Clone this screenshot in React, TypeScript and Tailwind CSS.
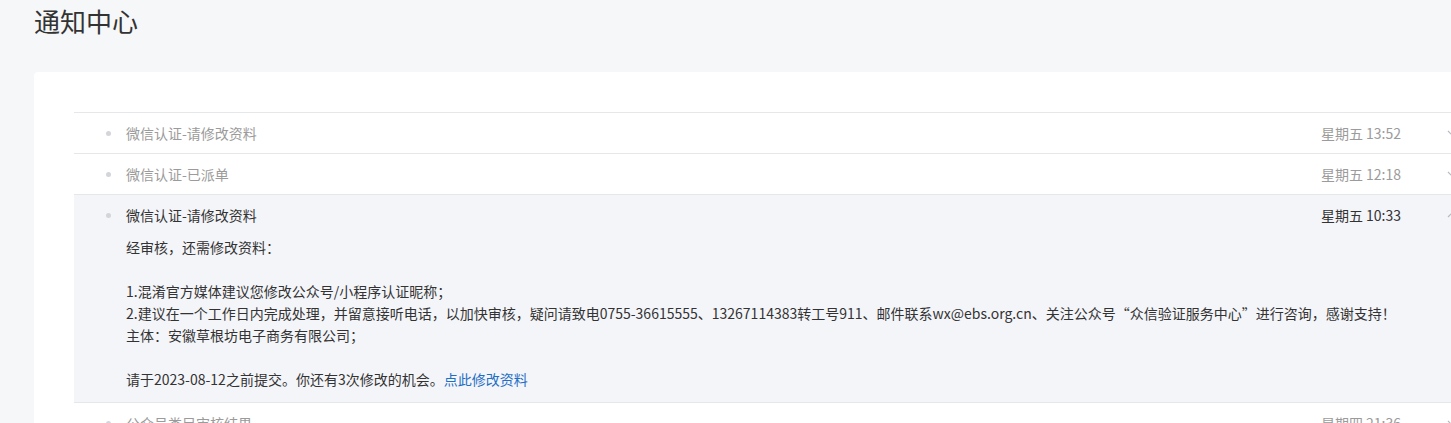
import React from "react";

function Chevron({ up }: { up?: boolean }) {
  return (
    <svg width="10" height="6" viewBox="0 0 10 6" className="shrink-0">
      {up ? (
        <path d="M1 5 L5 1 L9 5" fill="none" stroke="#b8bac0" strokeWidth="1.2" />
      ) : (
        <path d="M1 1 L5 5 L9 1" fill="none" stroke="#b8bac0" strokeWidth="1.2" />
      )}
    </svg>
  );
}

function Row({
  title,
  time,
  active,
  up,
}: {
  title: string;
  time: string;
  active?: boolean;
  up?: boolean;
}) {
  return (
    <div className="flex h-[40px] items-center pl-[32px] pr-[13px]">
      <span className="h-[5px] w-[5px] shrink-0 rounded-full bg-[#d3d5da]" />
      <span
        className={
          active
            ? "ml-[15px] text-[14px] text-[#333333]"
            : "ml-[15px] text-[14px] text-[#9b9b9b]"
        }
      >
        {title}
      </span>
      <span
        className={
          active
            ? "ml-auto text-[14px] text-[#333333]"
            : "ml-auto text-[14px] text-[#9b9b9b]"
        }
      >
        {time}
      </span>
      <span className="ml-[46px]">
        <Chevron up={up} />
      </span>
    </div>
  );
}

export default function App() {
  return (
    <div className="h-[423px] w-full overflow-hidden bg-[#f6f7f9] font-['Noto_Sans_CJK_SC',sans-serif]">
      <div className="h-[42px] pl-[34px] text-[26px] leading-[42px] text-[#333333]">
        通知中心
      </div>
      <div className="ml-[34px] mt-[30px] w-[1520px] rounded-[4px] bg-white pl-[40px] pt-[40px]">
        <div className="w-[1396px]">
          <div className="border-t border-[#e6e7eb]">
            <Row title="微信认证-请修改资料" time="星期五 13:52" />
          </div>
          <div className="border-t border-[#e6e7eb]">
            <Row title="微信认证-已派单" time="星期五 12:18" />
          </div>
          <div className="border-t border-[#e6e7eb] bg-[#f4f5f9]">
            <Row title="微信认证-请修改资料" time="星期五 10:33" active up />
            <div className="pb-[12px] pl-[52px] pt-[1px] text-[14px] leading-[22px] text-[#333333]">
              <div>经审核，还需修改资料：</div>
              <div className="h-[22px]" />
              <div>1.混淆官方媒体建议您修改公众号/小程序认证昵称；</div>
              <div>
                2.建议在一个工作日内完成处理，并留意接听电话，以加快审核，疑问请致电0755-36615555、13267114383转工号911、邮件联系wx@ebs.org.cn、关注公众号“众信验证服务中心”进行咨询，感谢支持！
              </div>
              <div>主体：安徽草根坊电子商务有限公司；</div>
              <div className="h-[22px]" />
              <div>
                请于2023-08-12之前提交。你还有3次修改的机会。
                <span className="text-[#1f6fc5]">点此修改资料</span>
              </div>
            </div>
          </div>
          <div className="border-t border-[#e6e7eb]">
            <Row title="公众号类目审核结果" time="星期四 21:36" />
          </div>
        </div>
      </div>
    </div>
  );
}
